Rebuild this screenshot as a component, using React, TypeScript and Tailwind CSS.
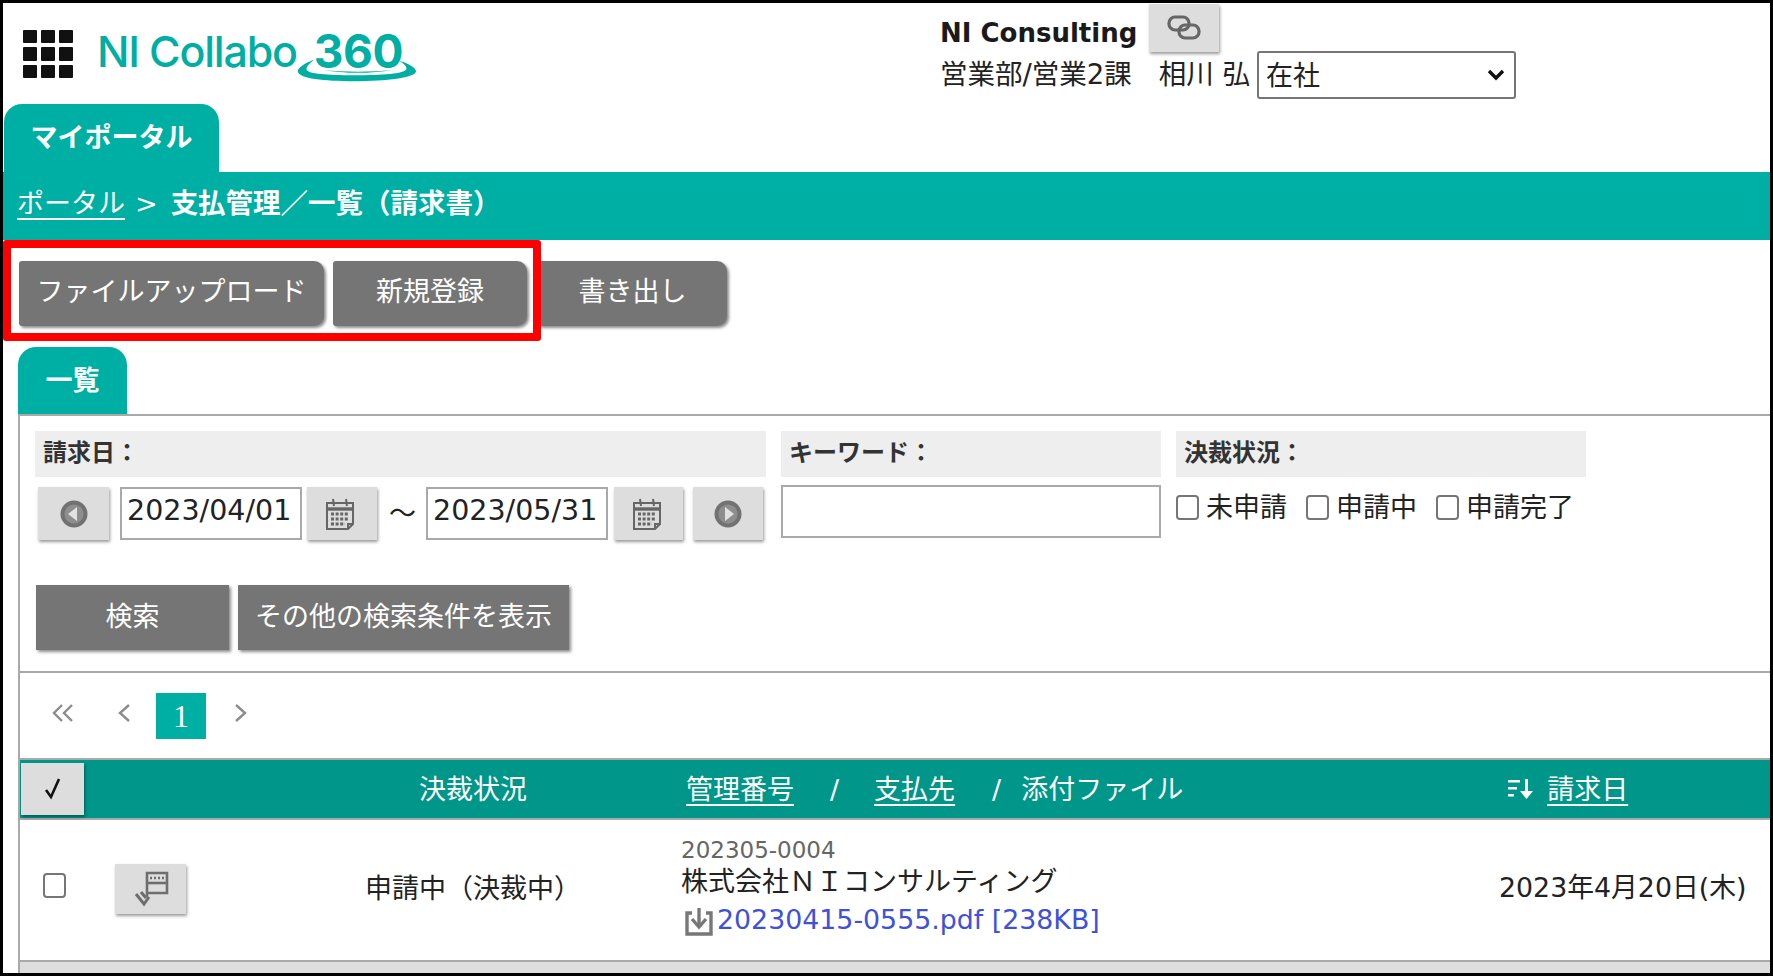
const CalendarIcon = () => (
  <svg width="32" height="34" viewBox="0 0 32 34" fill="none" stroke="#666666" strokeWidth="2">
    <path d="M3 6h26v21l-5 5H3z" fill="#dddddd" />
    <path d="M24 32v-5h5" />
    <path d="M3 12h26" strokeWidth="3.4" />
    <path d="M9 2l1 7M22 2l1 7" />
    <path d="M7 17h18M7 22h18M7 27h14" strokeWidth="3" strokeDasharray="3 1.6" />
  </svg>
);

const RoundArrow = ({ dir }: { dir: "left" | "right" }) => (
  <svg width="28" height="28" viewBox="0 0 28 28">
    <circle cx="14" cy="14" r="13.5" fill="#727272" />
    <circle cx="14" cy="14" r="9.5" fill="#8e8e8e" />
    <path d={dir === "left" ? "M17 7v14l-9-7z" : "M11 7v14l9-7z"} fill="#e2e2e2" />
  </svg>
);

const LightButton = ({ children, className }: { children: React.ReactNode; className: string }) => (
  <div className={`flex items-center justify-center bg-[#dddddd] shadow-[1px_2px_3px_rgba(0,0,0,0.4)] ${className}`}>
    {children}
  </div>
);

const Checkbox = () => <span className="inline-block h-[25px] w-[23px] shrink-0 rounded-[4px] border-2 border-[#767676] bg-white" />;

const CheckItem = ({ label }: { label: string }) => (
  <span className="flex items-center gap-[7px]">
    <Checkbox />
    {label}
  </span>
);

const DarkButton = ({ label, className }: { label: string; className: string }) => (
  <div className={`flex items-center justify-center bg-[#757575] text-white shadow-[2px_2px_3px_rgba(0,0,0,0.45)] ${className}`}>
    {label}
  </div>
);

const Chevron = ({ d, width }: { d: string; width: number }) => (
  <svg className="mt-[11px]" width={width} height="18" viewBox={`0 0 ${width} 18`} fill="none" stroke="#8c8c8c" strokeWidth="2.4">
    <path d={d} />
  </svg>
);

export default function App() {
  return (
    <div className="flex h-[976px] w-[1773px] flex-col overflow-hidden border-[3px] border-black bg-white font-['DejaVu_Sans','Noto_Sans_CJK_JP',sans-serif] text-[27px] leading-none text-[#222222]">
      {/* header */}
      <div className="flex h-[101px] shrink-0">
        <div className="ml-[20px] mt-[27px] grid h-[48px] w-[50px] grid-cols-3 gap-[4px]">
          {Array.from({ length: 9 }).map((_, i) => (
            <span key={i} className="rounded-[1px] bg-[#111111]" />
          ))}
        </div>
        <div className="relative ml-[24px] mt-[25px] flex h-[52px] w-[330px] items-start">
          <span className="font-['Inter',sans-serif] text-[43px] font-medium leading-[46px] tracking-[-1.2px] text-[#00aea3]">NI Collabo</span>
          <span className="ml-[17px] font-['Inter',sans-serif] text-[46px] font-bold leading-[46px] tracking-[-0.5px] text-[#00aea3]">360</span>
          <svg className="absolute left-[200px] top-[30px]" width="120" height="24" viewBox="0 0 124 32" preserveAspectRatio="none">
            <path d="M18 2C6 8 0 14 1 19c2 8 26 12 58 12 34 0 63-5 64-13 0-5-7-10-18-15 6 5 9 9 8 12-2 6-25 8-54 8-28 0-47-2-49-7-1-4 3-9 8-14z" fill="#00aea3" />
            <path d="M28 16c20 3 50 3 70 0-20 5-50 5-70 0z" fill="#00aea3" />
          </svg>
        </div>
        <div className="ml-[513px] flex flex-col">
          <div className="flex h-[48px] items-start">
            <span className="mt-[17px] text-[26px] font-bold text-[#1a1a1a]">NI Consulting</span>
            <LightButton className="ml-[12px] mt-[1px] h-[48px] w-[70px]">
              <svg width="34" height="28" viewBox="0 0 34 28" fill="none" stroke="#666666" strokeWidth="3.2">
                <rect x="2" y="3" width="20" height="13" rx="6" />
                <rect x="12" y="11" width="20" height="13" rx="6" />
              </svg>
            </LightButton>
          </div>
          <div className="flex h-[48px] items-center">
            <span className="text-[27.5px]">営業部/営業2課</span>
            <span className="ml-[27px] text-[27.5px]">相川 弘</span>
            <div className="ml-[7px] flex h-[48px] w-[259px] items-center justify-between rounded-[3px] border-2 border-[#767676] pl-[7px] pr-[9px]">
              <span>在社</span>
              <svg width="18" height="12" viewBox="0 0 18 12" fill="none" stroke="#111111" strokeWidth="3.4">
                <path d="M2 2l7 7 7-7" />
              </svg>
            </div>
          </div>
        </div>
      </div>

      {/* tab + breadcrumb */}
      <div className="ml-[1px] flex h-[68px] w-[215px] shrink-0 items-center justify-center rounded-t-[18px] bg-[#00afa4] pb-[2px] text-[27px] font-bold text-white">
        マイポータル
      </div>
      <div className="flex h-[68px] shrink-0 items-center bg-[#00afa4] pb-[5px] pl-[14px] text-white">
        <span className="underline underline-offset-[5px]">ポータル</span>
        <span className="ml-[10px]">&gt;</span>
        <span className="ml-[13px] text-[27.5px] font-bold">支払管理／一覧（請求書）</span>
      </div>

      {/* toolbar */}
      <div className="relative flex h-[107px] shrink-0 pl-[16px] pt-[21px]">
        <DarkButton label="ファイルアップロード" className="h-[65px] w-[305px] rounded-r-[10px] rounded-l-[3px] pb-[4px]" />
        <DarkButton label="新規登録" className="ml-[9px] h-[65px] w-[194px] rounded-r-[10px] rounded-l-[3px] pb-[4px]" />
        <DarkButton label="書き出し" className="ml-[11px] h-[65px] w-[189px] rounded-r-[10px] rounded-l-[3px] pb-[4px]" />
        <div className="absolute left-0 top-0 h-[101px] w-[538px] rounded-[3px] border-[8px] border-[#ff0000]" />
      </div>

      {/* sub tab */}
      <div className="ml-[15px] flex h-[67px] w-[109px] shrink-0 items-center justify-center rounded-t-[18px] bg-[#00afa4] font-bold text-white">
        一覧
      </div>

      {/* panel */}
      <div className="ml-[15px] flex min-h-0 flex-1 flex-col border-l-2 border-t-2 border-[#a9a9a9]">
        <div className="h-[257px] shrink-0 border-b-2 border-[#a9a9a9] pl-[15px] pt-[15px]">
          <div className="flex gap-[15px]">
            <div className="w-[731px]">
              <div className="flex h-[46px] items-center bg-[#eeeeee] pb-[3px] pl-[8px] text-[24px] font-bold text-[#333333]">請求日：</div>
              <div className="mt-[10px] flex h-[53px] items-center text-[#222222]">
                <LightButton className="ml-[3px] h-[53px] w-[71px]"><RoundArrow dir="left" /></LightButton>
                <div className="ml-[11px] flex h-[53px] w-[182px] items-center border-2 border-[#a9a9a9] pb-[4px] pl-[5px] text-[28.5px]">2023/04/01</div>
                <LightButton className="ml-[5px] h-[53px] w-[70px] pr-[4px]"><CalendarIcon /></LightButton>
                <span className="ml-[12px] w-[37px]">～</span>
                <div className="flex h-[53px] w-[182px] items-center border-2 border-[#a9a9a9] pb-[4px] pl-[5px] text-[28.5px]">2023/05/31</div>
                <LightButton className="ml-[6px] h-[53px] w-[69px] pr-[4px]"><CalendarIcon /></LightButton>
                <LightButton className="ml-[10px] h-[53px] w-[70px]"><RoundArrow dir="right" /></LightButton>
              </div>
            </div>
            <div className="w-[380px]">
              <div className="flex h-[46px] items-center bg-[#eeeeee] pb-[3px] pl-[8px] text-[24px] font-bold text-[#333333]">キーワード：</div>
              <div className="mt-[8px] h-[53px] border-2 border-[#a9a9a9]" />
            </div>
            <div className="w-[410px]">
              <div className="flex h-[46px] items-center bg-[#eeeeee] pb-[3px] pl-[8px] text-[24px] font-bold text-[#333333]">決裁状況：</div>
              <div className="mt-[10px] flex h-[40px] items-center gap-[19px]">
                <CheckItem label="未申請" />
                <CheckItem label="申請中" />
                <CheckItem label="申請完了" />
              </div>
            </div>
          </div>
          <div className="ml-[1px] mt-[45px] flex gap-[9px]">
            <DarkButton label="検索" className="h-[65px] w-[193px] pb-[3px]" />
            <DarkButton label="その他の検索条件を表示" className="h-[65px] w-[331px] pb-[3px]" />
          </div>
        </div>

        {/* pagination */}
        <div className="flex h-[85px] shrink-0 items-start pt-[20px]">
          <span className="ml-[32px]"><Chevron width={21} d="M10 1L2 9l8 8M20 1l-8 8 8 8" /></span>
          <span className="ml-[45px]"><Chevron width={12} d="M11 1L2 9l9 8" /></span>
          <span className="ml-[26px] flex h-[46px] w-[50px] items-center justify-center bg-[#00afa4] font-['Liberation_Serif',serif] text-[32px] text-white">1</span>
          <span className="ml-[29px]"><Chevron width={12} d="M1 1l9 8-9 8" /></span>
        </div>

        {/* table head */}
        <div className="flex h-[62px] shrink-0 items-center border-y-2 border-[#a9a9a9] bg-[#00968a] text-white">
          <LightButton className="ml-[1px] h-[52px] w-[63px] text-[#111111]">
            <svg width="20" height="24" viewBox="0 0 20 24" fill="none" stroke="#111111" strokeWidth="2.6">
              <path d="M3 13l5 7 8-18" />
            </svg>
          </LightButton>
          <span className="ml-[335px] w-[267px]">決裁状況</span>
          <span className="underline underline-offset-[5px]">管理番号</span>
          <span className="ml-[36px]">/</span>
          <span className="ml-[35px] underline underline-offset-[5px]">支払先</span>
          <span className="ml-[37px]">/</span>
          <span className="ml-[20px]">添付ファイル</span>
          <svg className="ml-[324px]" width="28" height="22" viewBox="0 0 28 22" fill="#ffffff">
            <path d="M1 2h12v2.4H1zM1 9h9v2.4H1zM1 16h6v2.4H1z" />
            <path d="M18 1h3v12h5l-6.5 8L13 13h5z" />
          </svg>
          <span className="ml-[12px] underline underline-offset-[5px]">請求日</span>
        </div>

        {/* table row */}
        <div className="flex h-[140px] shrink-0 items-center">
          <span className="ml-[23px] mb-[10px] inline-flex"><Checkbox /></span>
          <LightButton className="ml-[49px] mb-[3px] h-[50px] w-[71px]">
            <svg width="36" height="36" viewBox="0 0 36 36" fill="none" stroke="#6e6e6e" strokeWidth="2.6">
              <path d="M14 26V2h20v20H14" />
              <path d="M14 12h20" />
              <path d="M17 7h14" strokeDasharray="2 2" />
              <path d="M3 23l8 10 5-7M8 21l5 6" strokeWidth="3" />
            </svg>
          </LightButton>
          <span className="ml-[179px] w-[316px] pb-[3px]">申請中（決裁中）</span>
          <div className="flex w-[815px] flex-col pb-[3px]">
            <span className="text-[23px] leading-[28px] text-[#666666]">202305-0004</span>
            <span className="text-[27px] leading-[36px]">株式会社ＮＩコンサルティング</span>
            <span className="ml-[3px] flex h-[42px] items-center text-[26.8px] text-[#3f51d9]">
              <svg className="mr-[3px]" width="30" height="30" viewBox="0 0 30 30" fill="none" stroke="#777777" strokeWidth="3.4">
                <path d="M8 7H3v21h24V7h-5" />
                <path d="M15 2v18" />
                <path d="M8 13l7 8 7-8" />
              </svg>
              20230415-0555.pdf [238KB]
            </span>
          </div>
          <span className="ml-[3px] pb-[3px] text-[26.8px]">2023年4月20日(木)</span>
        </div>

        <div className="flex-1 border-t-2 border-[#a9a9a9] bg-[#dddddd]" />
      </div>
    </div>
  );
}
